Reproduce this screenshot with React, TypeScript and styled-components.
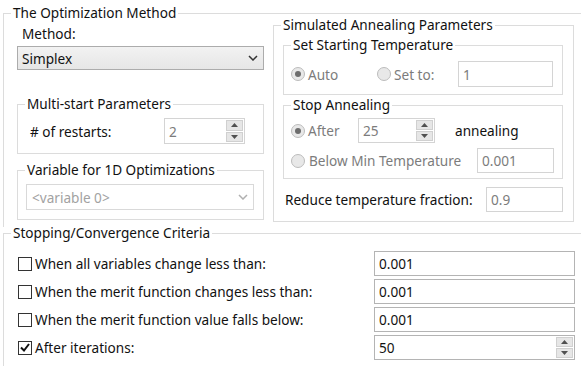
import { Fragment } from "react";
import styled, { createGlobalStyle } from "styled-components";

const GlobalStyle = createGlobalStyle`
  html, body {
    margin: 0;
    padding: 0;
    background: #fff;
    overflow: hidden;
  }
  body {
    font-family: "Noto Sans", "Liberation Sans", sans-serif;
    font-size: 13.6px;
    color: #111;
  }
`;

const Page = styled.div`
  width: 581px;
  height: 366px;
  overflow: hidden;
  padding-left: 3px;
  box-sizing: border-box;
`;

// group box, like a win32 GroupBox
const Group = styled.fieldset<{ $pad: string; $width?: number; $noBottom?: boolean }>`
  margin: 0;
  padding: ${(p) => p.$pad};
  border: 1px solid #dcdcdc;
  border-bottom: ${(p) => (p.$noBottom ? "none" : "1px solid #dcdcdc")};
  min-width: 0;
  width: ${(p) => (p.$width ? `${p.$width}px` : "auto")};
  box-sizing: border-box;
`;

const Legend = styled.legend<{ $offset: number }>`
  padding: 0 2px;
  margin-left: ${(p) => p.$offset}px;
  line-height: 12px;
  white-space: nowrap;
`;

const TopRow = styled.div`
  display: flex;
  align-items: flex-start;
  gap: 9px;
  height: 208px;
`;

const LeftColumn = styled.div`
  width: 247px;
  display: flex;
  flex-direction: column;
`;

const FieldLabel = styled.div`
  margin: 6px 0 3px 5px;
  line-height: 18px;
`;

const Combo = styled.div<{ $disabled?: boolean; $height: number }>`
  height: ${(p) => p.$height}px;
  box-sizing: border-box;
  display: flex;
  align-items: center;
  justify-content: space-between;
  padding: 0 5px 0 ${(p) => (p.$disabled ? 5 : 4)}px;
  border: 1px solid ${(p) => (p.$disabled ? "#d9d9d9" : "#acacac")};
  background: ${(p) => (p.$disabled ? "#fff" : "linear-gradient(#f2f2f2, #e6e6e6)")};
  color: ${(p) => (p.$disabled ? "#a2a2a2" : "#111")};
`;

const Row = styled.div<{ $height: number; $mt?: number }>`
  display: flex;
  align-items: center;
  height: ${(p) => p.$height}px;
  margin-top: ${(p) => p.$mt ?? 0}px;
`;

const Spacer = styled.div`
  flex: 1;
`;

const TextBox = styled.div<{ $width: number; $height: number; $disabled?: boolean }>`
  width: ${(p) => p.$width}px;
  height: ${(p) => p.$height}px;
  box-sizing: border-box;
  border: 1px solid ${(p) => (p.$disabled ? "#d4d4d4" : "#b4b4b4")};
  background: #fff;
  color: ${(p) => (p.$disabled ? "#7c7c7c" : "#111")};
  display: flex;
  align-items: center;
  padding-left: 4px;
  flex-shrink: 0;
`;

const SpinBox = styled(TextBox)`
  padding-left: 0;
`;

const SpinValue = styled.div`
  flex: 1;
  padding-left: 4px;
`;

const SpinButtons = styled.div`
  width: 18px;
  align-self: stretch;
  display: flex;
  flex-direction: column;
  gap: 1px;
  padding: 1px 1px 1px 0;
  box-sizing: border-box;
`;

const SpinButton = styled.div`
  flex: 1;
  background: #e6e6e6;
  border: 1px solid #d0d0d0;
  display: flex;
  align-items: center;
  justify-content: center;
`;

const RadioOption = styled.div<{ $width?: number; $gap?: number }>`
  display: flex;
  align-items: center;
  gap: ${(p) => p.$gap ?? 3}px;
  width: ${(p) => (p.$width ? `${p.$width}px` : "auto")};
  flex-shrink: 0;
  color: #7c7c7c;
  white-space: nowrap;
`;

const RadioCircle = styled.span<{ $checked?: boolean }>`
  width: 14px;
  height: 14px;
  box-sizing: border-box;
  border-radius: 50%;
  border: 1px solid #bcbcbc;
  background: #e8e8e8;
  display: flex;
  align-items: center;
  justify-content: center;
  &::after {
    content: "";
    width: 6px;
    height: 6px;
    border-radius: 50%;
    background: ${(p) => (p.$checked ? "#6d6d6d" : "transparent")};
  }
`;

const PlainText = styled.span<{ $ml?: number; $pl?: number }>`
  margin-left: ${(p) => p.$ml ?? 0}px;
  padding-left: ${(p) => p.$pl ?? 0}px;
  white-space: nowrap;
`;

const CriteriaGrid = styled.div`
  display: grid;
  grid-template-columns: 356px 201px;
  grid-auto-rows: 25px;
  row-gap: 3px;
`;

const CheckLabel = styled.div`
  display: flex;
  align-items: center;
  gap: 3px;
  white-space: nowrap;
`;

const CheckBox = styled.span`
  width: 14px;
  height: 14px;
  box-sizing: border-box;
  border: 1px solid #333;
  background: #fff;
  display: flex;
  align-items: center;
  justify-content: center;
`;

const Chevron = ({ color }: { color: string }) => (
  <svg width="10" height="6" viewBox="0 0 10 6">
    <path d="M1 1 L5 5 L9 1" fill="none" stroke={color} strokeWidth="1.5" />
  </svg>
);

const Arrow = ({ up }: { up?: boolean }) => (
  <svg width="7" height="4" viewBox="0 0 7 4">
    <path d={up ? "M0 4 L3.5 0 L7 4 Z" : "M0 0 L3.5 4 L7 0 Z"} fill="#505050" />
  </svg>
);

const Spinner = ({ value, width, height, disabled }: { value: string; width: number; height: number; disabled?: boolean }) => (
  <SpinBox $width={width} $height={height} $disabled={disabled}>
    <SpinValue>{value}</SpinValue>
    <SpinButtons>
      <SpinButton>
        <Arrow up />
      </SpinButton>
      <SpinButton>
        <Arrow />
      </SpinButton>
    </SpinButtons>
  </SpinBox>
);

const Check = ({ checked }: { checked?: boolean }) => (
  <CheckBox>
    {checked && (
      <svg width="10" height="9" viewBox="0 0 10 9">
        <path d="M1 4.5 L4 7.5 L9 1" fill="none" stroke="#111" strokeWidth="2" />
      </svg>
    )}
  </CheckBox>
);

const criteria = [
  { label: "When all variables change less than:", value: "0.001" },
  { label: "When the merit function changes less than:", value: "0.001" },
  { label: "When the merit function value falls below:", value: "0.001" },
];

export default function App() {
  return (
    <Page>
      <GlobalStyle />
      <Group $pad="0 0 0 13px" $width={640} $noBottom style={{ marginTop: 7 }}>
        <Legend $offset={-6}>The Optimization Method</Legend>
        <TopRow>
          <LeftColumn>
            <FieldLabel>Method:</FieldLabel>
            <Combo $height={24}>
              Simplex
              <Chevron color="#333" />
            </Combo>

            <Group $pad="8px 18px 9px 12px" style={{ marginTop: 28 }}>
              <Legend $offset={-5}>Multi-start Parameters</Legend>
              <Row $height={26}>
                <PlainText>#&nbsp;of restarts:</PlainText>
                <Spacer />
                <Spinner value="2" width={81} height={26} disabled />
              </Row>
            </Group>

            <Group $pad="8px 9px 9px 8px" style={{ marginTop: 10 }}>
              <Legend $offset={-1}>Variable for 1D Optimizations</Legend>
              <Combo $height={26} $disabled>
                &lt;variable 0&gt;
                <Chevron color="#b0b0b0" />
              </Combo>
            </Group>
          </LeftColumn>

          <Group $pad="0 10px 9px 9px" $width={301}>
            <Legend $offset={-2}>Simulated Annealing Parameters</Legend>

            <Group $pad="10px 8px 7px 7px" style={{ marginTop: 8 }}>
              <Legend $offset={0}>Set Starting Temperature</Legend>
              <Row $height={26}>
                <RadioOption $width={86}>
                  <RadioCircle $checked />
                  Auto
                </RadioOption>
                <RadioOption $width={81}>
                  <RadioCircle />
                  Set to:
                </RadioOption>
                <TextBox $width={95} $height={26} $disabled>
                  1
                </TextBox>
              </Row>
            </Group>

            <Group $pad="7px 8px 5px 7px" style={{ marginTop: 4 }}>
              <Legend $offset={0}>Stop Annealing</Legend>
              <Row $height={25}>
                <RadioOption $width={67}>
                  <RadioCircle $checked />
                  After
                </RadioOption>
                <Spinner value="25" width={77} height={25} disabled />
                <PlainText $ml={20}>annealing</PlainText>
              </Row>
              <Row $height={25} $mt={5}>
                <RadioOption $gap={4}>
                  <RadioCircle />
                  Below Min Temperature
                </RadioOption>
                <Spacer />
                <TextBox $width={77} $height={25} $disabled>
                  0.001
                </TextBox>
              </Row>
            </Group>

            <Row $height={25} $mt={8}>
              <PlainText $pl={2}>Reduce temperature fraction:</PlainText>
              <Spacer />
              <TextBox $width={77} $height={25} $disabled>
                0.9
              </TextBox>
            </Row>
          </Group>
        </TopRow>
      </Group>

      <Group $pad="12px 0 20px 14px" $width={640}>
        <Legend $offset={-7}>Stopping/Convergence Criteria</Legend>
        <CriteriaGrid>
          {criteria.map((c) => (
            <Fragment key={c.label}>
              <CheckLabel>
                <Check />
                {c.label}
              </CheckLabel>
              <TextBox $width={201} $height={25}>
                {c.value}
              </TextBox>
            </Fragment>
          ))}
          <CheckLabel>
            <Check checked />
            After iterations:
          </CheckLabel>
          <Spinner value="50" width={201} height={25} />
        </CriteriaGrid>
      </Group>
    </Page>
  );
}
